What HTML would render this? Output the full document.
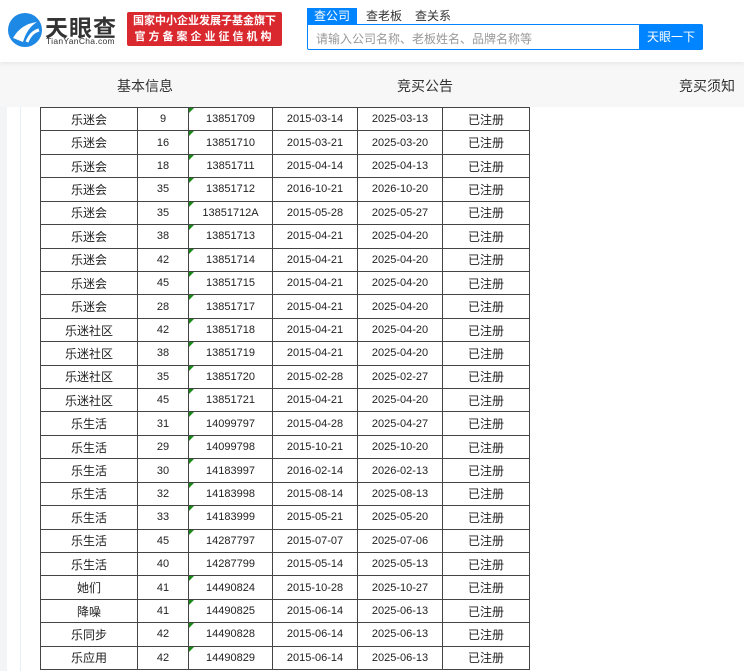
<!DOCTYPE html><html><head><meta charset="utf-8"><style>
*{margin:0;padding:0;box-sizing:border-box}
body{width:744px;height:671px;overflow:hidden;background:#fff;font-family:"Liberation Sans","Noto Sans CJK SC",sans-serif;position:relative}
.hdr{position:absolute;left:0;top:0;width:744px;height:62px;background:#fff;box-shadow:0 2px 4px rgba(0,0,0,.06);z-index:2}
.nav{position:absolute;top:62px;left:0;width:744px;height:45px;background:#f7f7f7;font-size:14px;color:#333}
.nav span{position:absolute;top:14px}
.side{position:absolute;left:0;top:107px;width:7px;height:564px;background:#f3f4f6}
.vl{position:absolute;left:20px;top:107px;width:1px;height:564px;background:#e6eef7}
table{position:absolute;left:40px;top:107px;border-collapse:collapse;font-size:11px;color:#222;font-family:"Liberation Sans","Noto Sans CJK SC",sans-serif}
td{border:1px solid #444;height:23.43px;text-align:center;padding:0;position:relative;background:#fff}
td.n{font-size:12px}
td.t::before{content:"";position:absolute;left:0;top:0;border-top:5px solid #1a8a1a;border-right:5px solid transparent}
</style></head><body>
<div class="hdr">
<svg style="position:absolute;left:7px;top:12px" width="36" height="36" viewBox="0 0 36 36"><circle cx="18" cy="18" r="17" fill="#1e88e5"/><path d="M6 26 Q14 12 30 10 Q20 16 16 30 Z" fill="#fff"/><path d="M20 30 Q24 20 32 18" stroke="#fff" stroke-width="3" fill="none"/></svg>
<div style="position:absolute;left:45px;top:9px;font-size:23px;font-weight:bold;color:#333;letter-spacing:1px">天眼查</div>
<div style="position:absolute;left:46px;top:36px;font-size:8.5px;color:#333;letter-spacing:.3px">TianYanCha.com</div>
<div style="position:absolute;left:127px;top:12px;width:155px;height:34px;background:#d9282e;border-radius:2px;color:#fff;font-size:11px;font-weight:bold;text-align:center;line-height:16px;padding-top:1px;white-space:nowrap">国家中小企业发展子基金旗下<br><span style="letter-spacing:3px">官方备案企业征信机构</span></div>
<div style="position:absolute;left:307px;top:8px;width:50px;height:16px;background:#0084ff;color:#fff;font-size:12px;text-align:center;line-height:16px">查公司</div>
<div style="position:absolute;left:366px;top:8px;font-size:12px;color:#333;line-height:16px">查老板</div>
<div style="position:absolute;left:415px;top:8px;font-size:12px;color:#333;line-height:16px">查关系</div>
<div style="position:absolute;left:307px;top:24px;width:396px;height:26px;border:1px solid #0084ff;border-radius:0 2px 2px 2px"></div>
<div style="position:absolute;left:316px;top:30px;font-size:12px;color:#999">请输入公司名称、老板姓名、品牌名称等</div>
<div style="position:absolute;left:639px;top:24px;width:64px;height:26px;background:#0084ff;color:#fff;font-size:12px;text-align:center;line-height:26px;border-radius:0 2px 2px 0">天眼一下</div>
</div>
<div class="nav"><span style="left:117px">基本信息</span><span style="left:397px">竞买公告</span><span style="left:679px">竞买须知</span></div>
<div class="side"></div><div class="vl"></div>
<table>
<colgroup><col style="width:97px"><col style="width:51px"><col style="width:84px"><col style="width:85px"><col style="width:85px"><col style="width:87px"></colgroup>
<tr><td class="n">乐迷会</td><td>9</td><td class="t">13851709</td><td>2015-03-14</td><td>2025-03-13</td><td class="n">已注册</td></tr>
<tr><td class="n">乐迷会</td><td>16</td><td class="t">13851710</td><td>2015-03-21</td><td>2025-03-20</td><td class="n">已注册</td></tr>
<tr><td class="n">乐迷会</td><td>18</td><td class="t">13851711</td><td>2015-04-14</td><td>2025-04-13</td><td class="n">已注册</td></tr>
<tr><td class="n">乐迷会</td><td>35</td><td class="t">13851712</td><td>2016-10-21</td><td>2026-10-20</td><td class="n">已注册</td></tr>
<tr><td class="n">乐迷会</td><td>35</td><td class="t">13851712A</td><td>2015-05-28</td><td>2025-05-27</td><td class="n">已注册</td></tr>
<tr><td class="n">乐迷会</td><td>38</td><td class="t">13851713</td><td>2015-04-21</td><td>2025-04-20</td><td class="n">已注册</td></tr>
<tr><td class="n">乐迷会</td><td>42</td><td class="t">13851714</td><td>2015-04-21</td><td>2025-04-20</td><td class="n">已注册</td></tr>
<tr><td class="n">乐迷会</td><td>45</td><td class="t">13851715</td><td>2015-04-21</td><td>2025-04-20</td><td class="n">已注册</td></tr>
<tr><td class="n">乐迷会</td><td>28</td><td class="t">13851717</td><td>2015-04-21</td><td>2025-04-20</td><td class="n">已注册</td></tr>
<tr><td class="n">乐迷社区</td><td>42</td><td class="t">13851718</td><td>2015-04-21</td><td>2025-04-20</td><td class="n">已注册</td></tr>
<tr><td class="n">乐迷社区</td><td>38</td><td class="t">13851719</td><td>2015-04-21</td><td>2025-04-20</td><td class="n">已注册</td></tr>
<tr><td class="n">乐迷社区</td><td>35</td><td class="t">13851720</td><td>2015-02-28</td><td>2025-02-27</td><td class="n">已注册</td></tr>
<tr><td class="n">乐迷社区</td><td>45</td><td class="t">13851721</td><td>2015-04-21</td><td>2025-04-20</td><td class="n">已注册</td></tr>
<tr><td class="n">乐生活</td><td>31</td><td class="t">14099797</td><td>2015-04-28</td><td>2025-04-27</td><td class="n">已注册</td></tr>
<tr><td class="n">乐生活</td><td>29</td><td class="t">14099798</td><td>2015-10-21</td><td>2025-10-20</td><td class="n">已注册</td></tr>
<tr><td class="n">乐生活</td><td>30</td><td class="t">14183997</td><td>2016-02-14</td><td>2026-02-13</td><td class="n">已注册</td></tr>
<tr><td class="n">乐生活</td><td>32</td><td class="t">14183998</td><td>2015-08-14</td><td>2025-08-13</td><td class="n">已注册</td></tr>
<tr><td class="n">乐生活</td><td>33</td><td class="t">14183999</td><td>2015-05-21</td><td>2025-05-20</td><td class="n">已注册</td></tr>
<tr><td class="n">乐生活</td><td>45</td><td class="t">14287797</td><td>2015-07-07</td><td>2025-07-06</td><td class="n">已注册</td></tr>
<tr><td class="n">乐生活</td><td>40</td><td>14287799</td><td>2015-05-14</td><td>2025-05-13</td><td class="n">已注册</td></tr>
<tr><td class="n">她们</td><td>41</td><td class="t">14490824</td><td>2015-10-28</td><td>2025-10-27</td><td class="n">已注册</td></tr>
<tr><td class="n">降噪</td><td>41</td><td class="t">14490825</td><td>2015-06-14</td><td>2025-06-13</td><td class="n">已注册</td></tr>
<tr><td class="n">乐同步</td><td>42</td><td class="t">14490828</td><td>2015-06-14</td><td>2025-06-13</td><td class="n">已注册</td></tr>
<tr><td class="n">乐应用</td><td>42</td><td class="t">14490829</td><td>2015-06-14</td><td>2025-06-13</td><td class="n">已注册</td></tr>
</table>
</body></html>
